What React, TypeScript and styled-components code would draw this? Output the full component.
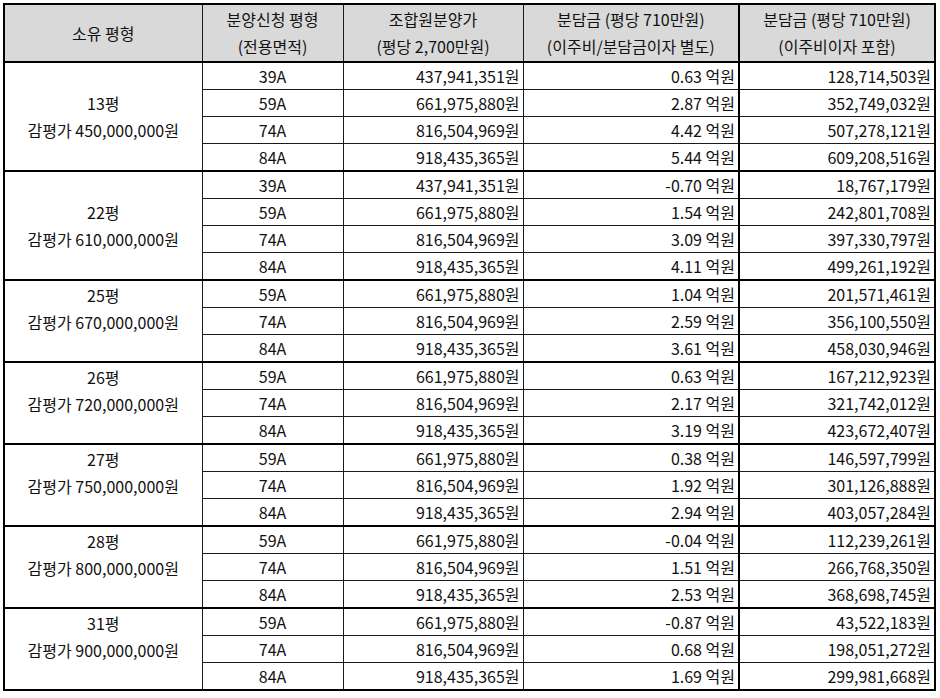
import * as React from 'react';
import styled, { createGlobalStyle } from 'styled-components';

interface Unit {
  type: string;
  price: string;
  share: string;
  total: string;
}

interface Group {
  size: string;
  value: string;
  units: Unit[];
}

const P39 = '437,941,351원';
const P59 = '661,975,880원';
const P74 = '816,504,969원';
const P84 = '918,435,365원';

const groups: Group[] = [
  {
    size: '13평',
    value: '450,000,000원',
    units: [
      { type: '39A', price: P39, share: '0.63', total: '128,714,503원' },
      { type: '59A', price: P59, share: '2.87', total: '352,749,032원' },
      { type: '74A', price: P74, share: '4.42', total: '507,278,121원' },
      { type: '84A', price: P84, share: '5.44', total: '609,208,516원' }
    ]
  },
  {
    size: '22평',
    value: '610,000,000원',
    units: [
      { type: '39A', price: P39, share: '-0.70', total: '18,767,179원' },
      { type: '59A', price: P59, share: '1.54', total: '242,801,708원' },
      { type: '74A', price: P74, share: '3.09', total: '397,330,797원' },
      { type: '84A', price: P84, share: '4.11', total: '499,261,192원' }
    ]
  },
  {
    size: '25평',
    value: '670,000,000원',
    units: [
      { type: '59A', price: P59, share: '1.04', total: '201,571,461원' },
      { type: '74A', price: P74, share: '2.59', total: '356,100,550원' },
      { type: '84A', price: P84, share: '3.61', total: '458,030,946원' }
    ]
  },
  {
    size: '26평',
    value: '720,000,000원',
    units: [
      { type: '59A', price: P59, share: '0.63', total: '167,212,923원' },
      { type: '74A', price: P74, share: '2.17', total: '321,742,012원' },
      { type: '84A', price: P84, share: '3.19', total: '423,672,407원' }
    ]
  },
  {
    size: '27평',
    value: '750,000,000원',
    units: [
      { type: '59A', price: P59, share: '0.38', total: '146,597,799원' },
      { type: '74A', price: P74, share: '1.92', total: '301,126,888원' },
      { type: '84A', price: P84, share: '2.94', total: '403,057,284원' }
    ]
  },
  {
    size: '28평',
    value: '800,000,000원',
    units: [
      { type: '59A', price: P59, share: '-0.04', total: '112,239,261원' },
      { type: '74A', price: P74, share: '1.51', total: '266,768,350원' },
      { type: '84A', price: P84, share: '2.53', total: '368,698,745원' }
    ]
  },
  {
    size: '31평',
    value: '900,000,000원',
    units: [
      { type: '59A', price: P59, share: '-0.87', total: '43,522,183원' },
      { type: '74A', price: P74, share: '0.68', total: '198,051,272원' },
      { type: '84A', price: P84, share: '1.69', total: '299,981,668원' }
    ]
  }
];

const GlobalStyle = createGlobalStyle`
  html, body {
    margin: 0;
    padding: 0;
    background: #ffffff;
  }
  body {
    font-family: "Noto Sans CJK KR", "Noto Sans", sans-serif;
    color: #111111;
  }
`;

const Sheet = styled.div`
  padding: 3px 0 0 3px;
`;

const Table = styled.table`
  border-collapse: collapse;
  table-layout: fixed;
  width: 931px;
  border: 2px solid #000000;
  font-size: 16px;
`;

const Head = styled.th<{ $thick?: boolean }>`
  background: #d9d9d9;
  font-weight: normal;
  text-align: center;
  vertical-align: middle;
  line-height: 27px;
  height: 56px;
  padding: 0;
  white-space: nowrap;
  border: 1px solid #1a1a1a;
  border-bottom: 2px solid #000000;
  ${p => (p.$thick ? 'border-left: 2px solid #000000;' : '')}
`;

const Cell = styled.td<{ $align?: string; $thick?: boolean; $first?: boolean }>`
  height: 26px;
  padding: 0 3px 0 3px;
  line-height: 24px;
  white-space: nowrap;
  text-align: ${p => p.$align || 'right'};
  vertical-align: middle;
  border: 1px solid #1a1a1a;
  ${p => (p.$thick ? 'border-left: 2px solid #000000;' : '')}
  ${p => (p.$first ? 'border-top: 2px solid #000000;' : '')}
`;

const Owner = styled.td<{ $short?: boolean }>`
  padding: 0 0 ${p => (p.$short ? '25px' : '0')} 0;
  text-align: center;
  vertical-align: middle;
  line-height: 27px;
  white-space: nowrap;
  border: 1px solid #1a1a1a;
  border-top: 2px solid #000000;
`;

const Line = styled.div`
  height: 27px;
`;

export default function App() {
  return (
    <>
      <GlobalStyle />
      <Sheet>
        <Table>
          <colgroup>
            <col style={{ width: 198 }} />
            <col style={{ width: 141 }} />
            <col style={{ width: 180 }} />
            <col style={{ width: 216 }} />
            <col style={{ width: 196 }} />
          </colgroup>
          <thead>
            <tr>
              <Head>소유 평형</Head>
              <Head>
                분양신청 평형
                <br />
                (전용면적)
              </Head>
              <Head>
                조합원분양가
                <br />
                (평당 2,700만원)
              </Head>
              <Head>
                분담금 (평당 710만원)
                <br />
                (이주비/분담금이자 별도)
              </Head>
              <Head $thick>
                분담금 (평당 710만원)
                <br />
                (이주비이자 포함)
              </Head>
            </tr>
          </thead>
          <tbody>
            {groups.map(g =>
              g.units.map((u, i) => (
                <tr key={g.size + u.type}>
                  {i === 0 && (
                    <Owner rowSpan={g.units.length} $short={g.units.length === 3}>
                      <Line>{g.size}</Line>
                      <Line>감평가 {g.value}</Line>
                    </Owner>
                  )}
                  <Cell $align="center" $first={i === 0}>
                    {u.type}
                  </Cell>
                  <Cell $first={i === 0}>{u.price}</Cell>
                  <Cell $first={i === 0}>{u.share} 억원</Cell>
                  <Cell $thick $first={i === 0}>
                    {u.total}
                  </Cell>
                </tr>
              ))
            )}
          </tbody>
        </Table>
      </Sheet>
    </>
  );
}
